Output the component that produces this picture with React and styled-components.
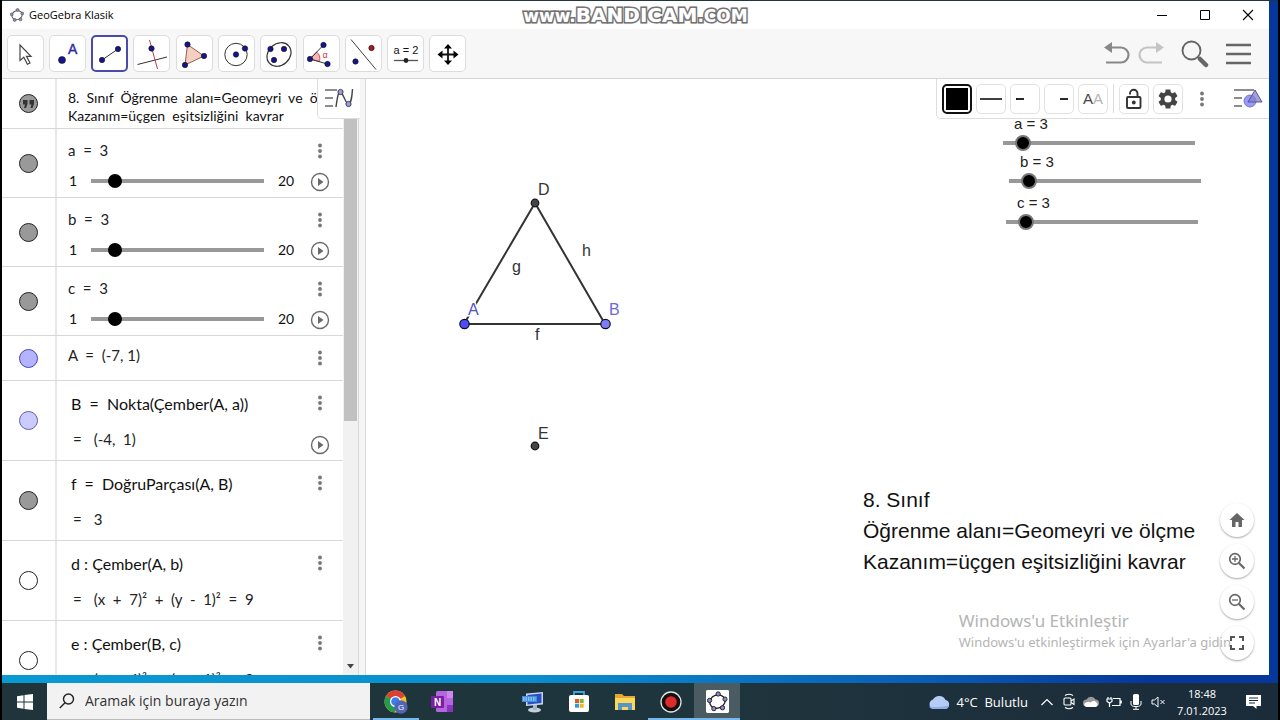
import React, { useState } from "react";
import styled, { createGlobalStyle } from "styled-components";

const UI = `"Open Sans", "Noto Sans", sans-serif`;
const MATH = `Lato, "Open Sans", sans-serif`;
const ARIAL = `"Liberation Sans", Arial, sans-serif`;

const GlobalStyle = createGlobalStyle`
  * { box-sizing: border-box; }
  body { margin: 0; background: #000; font-family: ${UI}; color: #111; }
  button { padding: 0; margin: 0; border: 0; background: none; font: inherit; color: inherit; }
  svg { display: block; }
`;

const Screen = styled.div`
  display: flex;
  flex-direction: column;
  height: 100vh;
  padding: 0 2px;
  background: #000;
  overflow: hidden;
`;
const Desktop = styled.div`
  flex: 1;
  min-height: 0;
  display: flex;
  padding: 0 9px 8px 0;
  border-top: 1px solid #22363d;
  background: linear-gradient(90deg, #0999d3 0%, #0a8fcf 40%, #0a62b8 70%, #06379b 90%, #06379b 100%);
`;
const Window = styled.main`
  flex: 1;
  min-width: 0;
  display: flex;
  flex-direction: column;
  background: #fff;
`;

/* title bar */
const TitleBar = styled.header`
  flex: none;
  display: grid;
  grid-template-columns: 1fr auto 1fr;
  align-items: center;
  height: 28px;
`;
const AppName = styled.div`
  display: flex;
  align-items: center;
  gap: 5px;
  padding-left: 8px;
  font-size: 11px;
  line-height: 16px;
  color: #000;
`;
const Watermark = styled.div`
  display: flex;
  align-items: baseline;
  font: 700 20px/26px "DejaVu Sans", sans-serif;
  color: #fff;
  -webkit-text-stroke: 3px #666;
  paint-order: stroke fill;
  text-shadow: 0 0 3px #999;
`;
const WatermarkSmall = styled.span`
  font-size: 17px;
`;
const WindowControls = styled.div`
  display: flex;
  justify-content: flex-end;
`;
const WindowButton = styled.button`
  display: grid;
  place-items: center;
  width: 43px;
  height: 27px;
`;

/* main tool bar */
const ToolBar = styled.nav`
  flex: none;
  display: flex;
  align-items: center;
  justify-content: space-between;
  height: 50px;
  padding: 0 8px 0 2px;
  background: #f7f7f7;
  border-bottom: 1px solid #d5d5d5;
`;
const Tools = styled.div`
  display: grid;
  grid-template-columns: repeat(11, 1fr);
  justify-items: center;
  width: 465px;
`;
const ToolButton = styled.button`
  display: grid;
  place-items: center;
  width: 37px;
  height: 37px;
  border: ${(p) => (p.$active ? "2px solid #4a4aa8" : "1px solid #dcdcdc")};
  border-radius: 5px;
  background: #fff;
`;
const ToolbarActions = styled.div`
  display: flex;
  align-items: center;
`;
const ActionButton = styled.button`
  display: grid;
  place-items: center;
  width: ${(p) => p.$width}px;
  height: 36px;
`;
const HistoryGroup = styled.div`
  display: flex;
  margin-right: 5px;
`;

/* algebra panel */
const Body = styled.div`
  flex: 1;
  min-height: 0;
  display: flex;
  overflow: hidden;
`;
const AlgebraPanel = styled.section`
  position: relative;
  flex: none;
  display: flex;
  width: 364px;
  overflow: hidden;
`;
const RowList = styled.ul`
  flex: 1;
  min-width: 0;
  margin: 0;
  padding: 0;
  list-style: none;
  font-family: ${MATH};
`;
const Row = styled.li`
  display: flex;
  height: ${(p) => p.$height}px;
  border-bottom: 1px solid #d8d8d8;
`;
const MarbleCell = styled.div`
  flex: none;
  display: grid;
  place-items: center;
  width: 55px;
  border-right: 2px solid #e8e8e8;
`;
const Marble = styled.button`
  display: grid;
  place-items: center;
  width: 19px;
  height: 19px;
  border-radius: 50%;
  border: 1px solid ${(p) => p.$line};
  background: ${(p) => p.$fill};
`;
const RowMain = styled.div`
  flex: 1;
  min-width: 0;
  display: flex;
  flex-direction: column;
  gap: ${(p) => p.$gap}px;
  padding: ${(p) => p.$top}px 0 0 ${(p) => p.$left}px;
`;
const Expression = styled.div`
  font-size: 16px;
  line-height: 20px;
  white-space: pre;
  color: #111;
`;
const Value = styled(Expression)`
  font-size: 15px;
  color: #222;
`;
const Output = styled(Value)`
  display: flex;
  gap: 12px;
  padding-left: 2px;
`;
const NoteText = styled.p`
  margin: 0;
  font-size: 14px;
  line-height: 18px;
  white-space: pre;
`;
const SliderLine = styled.label`
  display: grid;
  grid-template-columns: 23px 173px auto;
  align-items: center;
  height: 20px;
  font-size: 14px;
  line-height: 20px;
`;
const SliderMin = styled.span`
  padding-left: 1px;
`;
const SliderMax = styled.span`
  padding-left: 14px;
`;
const PanelRange = styled.input`
  appearance: none;
  width: 100%;
  height: 14px;
  margin: 0;
  background: none;
  &::-webkit-slider-runnable-track {
    height: 4px;
    background: #989898;
  }
  &::-webkit-slider-thumb {
    appearance: none;
    width: 14px;
    height: 14px;
    margin-top: -5px;
    border-radius: 50%;
    background: #000;
  }
`;
const RowActions = styled.div`
  flex: none;
  display: flex;
  flex-direction: column;
  align-items: center;
  justify-content: space-between;
  width: 46px;
  padding: 12px 0 5px;
`;
const IconButton = styled.button`
  display: grid;
  place-items: center;
  width: 20px;
  height: 20px;
`;
const ScrollBar = styled.div`
  flex: none;
  display: flex;
  flex-direction: column;
  justify-content: space-between;
  align-items: center;
  width: 15px;
  padding-bottom: 6px;
  background: #f1f1f1;
`;
const ScrollThumb = styled.div`
  width: 13px;
  height: 58%;
  background: #c1c1c1;
`;
const Divider = styled.div`
  flex: none;
  width: 8px;
  background: #f5f5f5;
  border: solid #d9d9d9;
  border-width: 0 1px;
`;
const PanelToggle = styled.button`
  position: absolute;
  top: 0;
  right: 6px;
  display: grid;
  place-items: center;
  width: 43px;
  height: 40px;
  background: #fff;
  border: solid #ddd;
  border-width: 0 0 1px 1px;
  border-radius: 0 0 0 5px;
`;

/* graphics view */
const Graphics = styled.section`
  position: relative;
  flex: 1;
  min-width: 0;
  overflow: hidden;
  background: #fff;
`;
const Drawing = styled.svg`
  position: absolute;
  left: 0;
  top: 0;
  font: 16px ${ARIAL};
`;
const CanvasSlider = styled.label`
  position: absolute;
  left: ${(p) => p.$x}px;
  top: ${(p) => p.$y}px;
  display: flex;
  flex-direction: column;
  width: 208px;
  font: 15px/20px ${ARIAL};
  color: #222;
`;
const CanvasSliderName = styled.span`
  padding-left: 19px;
`;
const CanvasRange = styled.input`
  appearance: none;
  width: 100%;
  height: 18px;
  margin: 0;
  background: linear-gradient(#989898, #989898) center / 192px 4px no-repeat;
  &::-webkit-slider-thumb {
    appearance: none;
    width: 16px;
    height: 16px;
    border: 2px solid #777;
    border-radius: 50%;
    background: #000;
  }
`;
const CanvasNote = styled.p`
  position: absolute;
  left: 497px;
  top: 405px;
  margin: 0;
  font: 21px/31px ${ARIAL};
  white-space: pre;
  color: #111;
`;
const Activation = styled.div`
  position: absolute;
  right: 38px;
  bottom: 23px;
  font-family: "Noto Sans", sans-serif;
  color: #b4b4b4;
  white-space: nowrap;
`;
const ActivationTitle = styled.div`
  font-size: 17px;
  line-height: 22px;
`;
const ActivationText = styled.div`
  font-size: 13px;
  line-height: 20px;
`;
const StyleBar = styled.div`
  position: absolute;
  top: 0;
  right: 0;
  display: flex;
  align-items: center;
  gap: 4px;
  height: 40px;
  padding: 0 6px 0 5px;
  background: #fff;
  border: solid #ddd;
  border-width: 0 0 1px 1px;
  border-radius: 0 0 0 5px;
`;
const StyleButton = styled.button`
  display: grid;
  place-items: center;
  width: 30px;
  height: 30px;
  border: ${(p) => (p.$selected ? "2px solid #111" : p.$plain ? "0" : "1px solid #e2e2e2")};
  border-radius: 5px;
  background: #fff;
`;
const Swatch = styled.span`
  width: 22px;
  height: 22px;
  background: #000;
`;
const Separator = styled.span`
  width: 1px;
  height: 29px;
  margin: 0 1px;
  background: #ddd;
`;
const StyleToggle = styled(StyleButton)`
  margin-left: 12px;
`;
const TextStyle = styled.span`
  font: 15px/20px ${ARIAL};
  color: #444;
`;
const Faded = styled.span`
  color: #b5b5b5;
`;
const ZoomControls = styled.div`
  position: absolute;
  right: 15px;
  bottom: 15px;
  display: flex;
  flex-direction: column;
  gap: 7px;
`;
const RoundButton = styled.button`
  display: grid;
  place-items: center;
  width: 34px;
  height: 34px;
  border-radius: 50%;
  background: ${(p) => (p.$clear ? "transparent" : "#fff")};
  box-shadow: 0 1px 2px rgba(0, 0, 0, 0.35);
`;

/* task bar */
const TaskBar = styled.footer`
  flex: none;
  display: flex;
  height: 37px;
  color: #fff;
  background: linear-gradient(90deg, #1f353b 0%, #1f353d 55%, #1a2b3a 100%);
`;
const StartButton = styled.button`
  display: grid;
  place-items: center;
  width: 45px;
`;
const SearchBox = styled.label`
  display: flex;
  align-items: center;
  gap: 10px;
  width: 323px;
  padding-left: 12px;
  background: #f2f2f2;
  border-bottom: 1px solid #bbb;
`;
const SearchInput = styled.input`
  flex: 1;
  min-width: 0;
  border: 0;
  outline: 0;
  padding: 0;
  background: none;
  font: 14px/20px ${UI};
  &::placeholder { color: #333; opacity: 1; }
`;
const Apps = styled.div`
  display: flex;
  padding-left: 3px;
`;
const AppButton = styled.button`
  display: grid;
  place-items: center;
  width: 46px;
  background: ${(p) => (p.$active ? "#4a5b62" : "none")};
  box-shadow: ${(p) => (p.$running ? "inset 0 -2px #76b9ed" : "none")};
`;
const AppGap = styled.span`
  width: 45px;
`;
const Tray = styled.div`
  display: flex;
  align-items: center;
  margin-left: auto;
  padding-right: 4px;
`;
const Weather = styled.div`
  display: flex;
  align-items: center;
  gap: 6px;
  margin-right: 8px;
  font-size: 13px;
  white-space: pre;
`;
const TrayIcons = styled.div`
  display: grid;
  grid-template-columns: repeat(6, 1fr);
  width: 134px;
`;
const TrayButton = styled.button`
  display: grid;
  place-items: center;
  height: 24px;
`;
const Clock = styled.div`
  width: 64px;
  font-size: 11px;
  line-height: 17px;
  text-align: center;
`;
const Notifications = styled.button`
  display: grid;
  place-items: center;
  width: 40px;
`;

const NAVY = "#15158c";
const Dot = ({ x, y, r = 2.7, fill = NAVY }) => <circle cx={x} cy={y} r={r} fill={fill} stroke="#111" strokeWidth=".6" />;

const PentagonLogo = ({ size, line = "#555", node = "#8d8db5" }) => (
  <svg width={size} height={size} viewBox="0 0 24 24">
    <ellipse cx="12" cy="12.300" rx="9" ry="7.600" transform="rotate(-20 12 12)" fill="none" stroke={line} strokeWidth="1.600" />
    {[[13, 3.500], [21, 9.500], [18, 19.500], [8, 20.500], [3, 11]].map(([x, y]) => (
      <circle key={x} cx={x} cy={y} r="2.500" fill={node} stroke={line} strokeWidth="1.100" />
    ))}
  </svg>
);

const toolIcons = [
  ["Taşı", <svg width="34" height="34"><path d="M12 8v15.500l3.800-3.200 3.600 7 2.600-1.300-3.500-6.700h4.500z" fill="#fff" stroke="#444" strokeWidth="1.200" /></svg>],
  ["Nokta", <svg width="34" height="34"><Dot x={12} y={23} r={3.5} /><text x="18" y="17" fontFamily="Liberation Sans" fontSize="14" fill="#2a2aa5" stroke="#2a2aa5" strokeWidth=".4">A</text></svg>],
  ["Doğru parçası", <svg width="34" height="34"><path d="M9 23 25 12" stroke="#333" /><Dot x={9} y={23} /><Dot x={25} y={12} /></svg>],
  ["Dik doğru", <svg width="34" height="34"><path d="M2.500 27.500 32 20" stroke="#333" /><path d="m14.500 3 8 29" stroke="#c0394b" /><Dot x={16.500} y={11.500} /></svg>],
  ["Çokgen", <svg width="34" height="34"><path d="M10.500 7.500 27 19 8 28z" fill="#f3d0c2" stroke="#a05a45" /><Dot x={10.500} y={7.500} /><Dot x={27} y={19} /><Dot x={8} y={28} /></svg>],
  ["Çember", <svg width="34" height="34"><circle cx="17" cy="17.500" r="11.200" fill="none" stroke="#333" /><Dot x={17} y={17.500} /><Dot x={26} y={11.500} /></svg>],
  ["Elips", <svg width="34" height="34"><ellipse cx="17" cy="17.500" rx="13" ry="10.700" transform="rotate(-42 17 17.500)" fill="none" stroke="#333" strokeWidth="1.200" /><Dot x={8.500} y={12} /><Dot x={22} y={12} /><Dot x={12} y={23} /></svg>],
  ["Açı", <svg width="34" height="34"><path d="m6 22 6.500-7q4.500 3 3 9.500z" fill="#f7b4b4" stroke="#c0394b" strokeWidth=".8" /><path d="M19.500 8 6 22l17.500 5" fill="none" stroke="#333" /><Dot x={6} y={22} /><Dot x={19.500} y={8} /><Dot x={23.500} y={27} /><text x="18.500" y="20.500" fontFamily="Liberation Sans" fontSize="9" fill="#c0394b">α</text></svg>],
  ["Yansıt", <svg width="34" height="34"><path d="m5 2.500 25 30" stroke="#444" /><Dot x={25.500} y={11} fill="#a3182c" /><Dot x={9.500} y={24.500} /></svg>],
  ["Sürgü", <svg width="34" height="34"><text x="17" y="17" textAnchor="middle" fontFamily="Liberation Sans" fontSize="11" fill="#111">a = 2</text><path d="M5 23.500h24" stroke="#555" strokeWidth="1.300" /><circle cx="17" cy="23.500" r="2.400" fill="#222" /></svg>],
  ["Grafik görünümünü taşı", <svg width="34" height="34"><path d="M17 10v15M10 17.500h15" stroke="#111" strokeWidth="1.800" /><path d="m17 7 4 4.500h-8zM17 28l4-4.500h-8zM6.500 17.500l5-4v8zM27.500 17.500l-5-4v8z" fill="#000" /></svg>],
];

const Dots = () => (
  <svg width="6" height="20" fill="#777"><circle cx="3" cy="4.500" r="1.900" /><circle cx="3" cy="10" r="1.900" /><circle cx="3" cy="15.500" r="1.900" /></svg>
);
const Play = () => (
  <svg width="20" height="20"><circle cx="10" cy="10" r="8.500" fill="none" stroke="#6a6a6a" strokeWidth="1.400" /><path d="M8 6v8l5.500-4z" fill="#6a6a6a" /></svg>
);
const ListLines = () => <path d="M1 3h12M1 11h8M1 19h8" stroke="#8c8c8c" strokeWidth="2" />;

const GREY = { $fill: "#999", $line: "#222" };
const objects = [
  { kind: "slider", name: "a", ...GREY },
  { kind: "slider", name: "b", ...GREY },
  { kind: "slider", name: "c", ...GREY },
  { kind: "value", name: "A", text: "A  =  (-7, 1)", $fill: "#b3b3ff", $line: "#4444b5" },
  { kind: "def", name: "B", text: "B  =  Nokta(Çember(A, a))", out: "(-4,  1)", play: true, $fill: "#cbcbff", $line: "#5f5fa5" },
  { kind: "def", name: "f", text: "f  =  DoğruParçası(A, B)", out: "3", ...GREY },
  { kind: "def", name: "d", text: "d : Çember(A, b)", out: "(x  +  7)²  +  (y  -  1)²  =  9", $fill: "#fff", $line: "#222" },
  { kind: "def", name: "e", text: "e : Çember(B, c)", out: "(x  +  4)²  +  (y  -  1)²  =  9", $fill: "#fff", $line: "#222" },
];
const layouts = {
  slider: { height: 69, $top: 11, $gap: 11, $left: 11 },
  value: { height: 45, $top: 9, $gap: 0, $left: 11 },
  def: { height: 80, $top: 13, $gap: 15, $left: 14 },
};

function AlgebraRow({ item, value, onChange }) {
  const { kind, name, text, out, play, $fill, $line } = item;
  const { height, ...spacing } = layouts[kind];
  return (
    <Row $height={height}>
      <MarbleCell><Marble $fill={$fill} $line={$line} aria-label={`${name} göster`} /></MarbleCell>
      <RowMain {...spacing}>
        {kind === "slider" && (
          <>
            <Value>{`${name}  =  ${value}`}</Value>
            <SliderLine>
              <SliderMin>1</SliderMin>
              <PanelRange type="range" min="1" max="20" value={value} onChange={onChange} aria-label={name} />
              <SliderMax>20</SliderMax>
            </SliderLine>
          </>
        )}
        {kind === "value" && <Value>{text}</Value>}
        {kind === "def" && (
          <>
            <Expression>{text}</Expression>
            <Output><span>=</span><span>{out}</span></Output>
          </>
        )}
      </RowMain>
      <RowActions>
        <IconButton aria-label="Diğer"><Dots /></IconButton>
        {(kind === "slider" || play) && <IconButton aria-label="Oynat"><Play /></IconButton>}
      </RowActions>
    </Row>
  );
}

const Magnifier = ({ sign }) => (
  <svg width="20" height="20" fill="none" stroke="#666"><circle cx="8" cy="8" r="5.300" strokeWidth="1.700" /><path d="m12 12 5.500 5.500" strokeWidth="2.200" /><path d={sign} strokeWidth="1.300" /></svg>
);

export default function App() {
  const [values, setValues] = useState({ a: 3, b: 3, c: 3 });
  const change = (name) => (e) => setValues({ ...values, [name]: Number(e.target.value) });
  return (
    <Screen>
      <GlobalStyle />
      <Desktop>
        <Window>
          <TitleBar>
            <AppName><PentagonLogo size={14} /><span>GeoGebra Klasik</span></AppName>
            <Watermark><WatermarkSmall>www.</WatermarkSmall>BANDICAM<WatermarkSmall>.COM</WatermarkSmall></Watermark>
            <WindowControls>
              <WindowButton aria-label="Küçült"><svg width="12" height="12"><path d="M1 6.500h10" stroke="#000" /></svg></WindowButton>
              <WindowButton aria-label="Büyüt"><svg width="12" height="12"><path d="M1.500 1.500h9v9h-9z" fill="none" stroke="#000" /></svg></WindowButton>
              <WindowButton aria-label="Kapat"><svg width="12" height="12"><path d="m1 1 10 10M11 1 1 11" stroke="#000" strokeWidth="1.100" /></svg></WindowButton>
            </WindowControls>
          </TitleBar>

          <ToolBar>
            <Tools>
              {toolIcons.map(([label, icon], i) => (
                <ToolButton key={label} $active={i === 2} aria-label={label}>{icon}</ToolButton>
              ))}
            </Tools>
            <ToolbarActions>
              <HistoryGroup>
                <ActionButton $width={34} aria-label="Geri al">
                  <svg width="28" height="24"><path d="M6 5.500h12a7.500 7.500 0 0 1 0 15H3" fill="none" stroke="#888" strokeWidth="2.200" /><path d="M1 5.500 9 0v11z" fill="#888" /></svg>
                </ActionButton>
                <ActionButton $width={34} aria-label="Yinele">
                  <svg width="28" height="24"><path d="M22 5.500H10a7.500 7.500 0 0 0 0 15h15" fill="none" stroke="#c4c4c4" strokeWidth="2.200" /><path d="M27 5.500 19 0v11z" fill="#c4c4c4" /></svg>
                </ActionButton>
              </HistoryGroup>
              <ActionButton $width={44} aria-label="Ara">
                <svg width="28" height="28"><circle cx="10.500" cy="10.500" r="9" fill="none" stroke="#666" strokeWidth="1.900" /><path d="m17 17 2.500 2.500" stroke="#666" strokeWidth="2" /><path d="m19 19 6 6" stroke="#666" strokeWidth="4.500" strokeLinecap="round" /></svg>
              </ActionButton>
              <ActionButton $width={44} aria-label="Menü">
                <svg width="26" height="22"><path d="M0 2h25M0 11h25M0 20h25" stroke="#666" strokeWidth="2.600" /></svg>
              </ActionButton>
            </ToolbarActions>
          </ToolBar>

          <Body>
            <AlgebraPanel>
              <RowList>
                <Row $height={50}>
                  <MarbleCell>
                    <Marble {...GREY} aria-label="Metin göster">
                      <svg width="13" height="10" fill="#333"><path d="M1 1h4.500v4L4 9H2l1-3.500H1zM7.500 1H12v4l-1.500 4h-2l1-3.500h-2z" /></svg>
                    </Marble>
                  </MarbleCell>
                  <RowMain $top={10} $gap={0} $left={11}>
                    <NoteText>{"8.  Sınıf  Öğrenme  alanı=Geomeyri  ve  ölçme\nKazanım=üçgen  eşitsizliğini  kavrar"}</NoteText>
                  </RowMain>
                </Row>
                {objects.map((o) => (
                  <AlgebraRow key={o.name} item={o} value={values[o.name]} onChange={change(o.name)} />
                ))}
              </RowList>
              <ScrollBar>
                <ScrollThumb />
                <svg width="9" height="5"><path d="M1 0h7L4.500 4.500z" fill="#444" /></svg>
              </ScrollBar>
              <Divider />
              <PanelToggle aria-label="Cebir görünümü">
                <svg width="30" height="24"><ListLines /><path d="M12 20C13.500 9 14.500 4 16.500 5c3 1.500 5 12 8 12 3-1 3.500-8 4-15" fill="none" stroke="#444" strokeWidth="1.400" /><circle cx="16.500" cy="5" r="2.600" fill="#9999e8" stroke="#444" /><circle cx="24.500" cy="17" r="2.600" fill="#9999e8" stroke="#444" /></svg>
              </PanelToggle>
            </AlgebraPanel>

            <Graphics>
              <Drawing width="300" height="400">
                <path d="M98 245h141L169 124z" fill="none" stroke="#333" strokeWidth="2" />
                <circle cx="98.500" cy="245" r="4.700" fill="#4d4dff" stroke="#111" strokeWidth="1.200" />
                <circle cx="239.500" cy="245" r="4.700" fill="#7d7dff" stroke="#111" strokeWidth="1.200" />
                <circle cx="169" cy="124" r="3.800" fill="#444" stroke="#111" strokeWidth="1.200" />
                <circle cx="169" cy="367" r="3.800" fill="#444" stroke="#111" strokeWidth="1.200" />
                <g fill="#333">
                  <text x="172" y="116">D</text>
                  <text x="216" y="177">h</text>
                  <text x="146" y="193">g</text>
                  <text x="169" y="261">f</text>
                  <text x="172" y="360">E</text>
                </g>
                <text x="102" y="236" fill="#5151c6" stroke="#fff" strokeWidth="3" paintOrder="stroke">A</text>
                <text x="243" y="236" fill="#6a6adb">B</text>
              </Drawing>
              {[["a", 629, 35], ["b", 635, 73], ["c", 632, 114]].map(([n, x, y]) => (
                <CanvasSlider key={n} $x={x} $y={y}>
                  <CanvasSliderName>{`${n} = ${values[n]}`}</CanvasSliderName>
                  <CanvasRange type="range" min="1" max="20" value={values[n]} onChange={change(n)} />
                </CanvasSlider>
              ))}
              <CanvasNote>{"8. Sınıf\nÖğrenme alanı=Geomeyri ve ölçme\nKazanım=üçgen eşitsizliğini kavrar"}</CanvasNote>
              <Activation>
                <ActivationTitle>Windows'u Etkinleştir</ActivationTitle>
                <ActivationText>Windows'u etkinleştirmek için Ayarlar'a gidin</ActivationText>
              </Activation>
              <StyleBar>
                <StyleButton $selected aria-label="Renk"><Swatch /></StyleButton>
                <StyleButton aria-label="Çizgi stili"><svg width="24" height="10"><path d="M1 5h22" stroke="#111" strokeWidth="1.600" /></svg></StyleButton>
                <StyleButton aria-label="Başlangıç"><svg width="24" height="10"><path d="M3 5h8" stroke="#111" strokeWidth="1.800" /></svg></StyleButton>
                <StyleButton aria-label="Bitiş"><svg width="24" height="10"><path d="M13 5h8" stroke="#111" strokeWidth="1.800" /></svg></StyleButton>
                <StyleButton aria-label="Etiket"><TextStyle>A<Faded>A</Faded></TextStyle></StyleButton>
                <Separator />
                <StyleButton aria-label="Kilitle">
                  <svg width="20" height="22" fill="none" stroke="#333" strokeWidth="1.900"><rect x="3" y="9" width="13.500" height="11" rx="1" /><path d="M6 6.500V5.500a3.700 3.700 0 0 1 7.500 0V9" /><circle cx="9.800" cy="14.500" r="1" fill="#333" /></svg>
                </StyleButton>
                <StyleButton aria-label="Ayarlar">
                  <svg width="24" height="24" viewBox="0 0 24 24"><path fill="#444" d="M19.140 12.940c.04-.3.060-.61.060-.94s-.02-.64-.07-.94l2.030-1.580a.5.500 0 0 0 .12-.61l-1.920-3.320a.49.490 0 0 0-.59-.22l-2.390.96c-.5-.38-1.030-.7-1.620-.94l-.36-2.540A.48.480 0 0 0 13.920 2.400h-3.840c-.24 0-.43.170-.47.410l-.36 2.540c-.59.240-1.130.570-1.620.94l-2.390-.96a.48.480 0 0 0-.59.220L2.740 8.870a.47.470 0 0 0 .12.610l2.030 1.580c-.05.300-.09.630-.09.940s.02.640.07.940l-2.030 1.580a.5.500 0 0 0-.12.610l1.920 3.320c.12.220.37.290.59.220l2.390-.96c.5.380 1.030.7 1.620.94l.36 2.540c.05.240.24.410.48.410h3.840c.24 0 .44-.17.47-.41l.36-2.540c.59-.24 1.130-.56 1.620-.94l2.390.96c.22.080.47 0 .59-.22l1.920-3.320a.5.500 0 0 0-.12-.61zM12 15.600a3.600 3.600 0 1 1 0-7.200 3.600 3.600 0 0 1 0 7.200z" /></svg>
                </StyleButton>
                <StyleButton $plain aria-label="Diğer"><Dots /></StyleButton>
                <StyleToggle $plain aria-label="Stil çubuğu">
                  <svg width="30" height="24"><ListLines /><path d="M13 3h8" stroke="#8c8c8c" strokeWidth="2" /><circle cx="17" cy="14" r="6" fill="#9a9af0" stroke="#7777cc" /><path d="m22 3 7 12H15z" fill="#8383c8" fillOpacity=".75" stroke="#5555a8" /></svg>
                </StyleToggle>
              </StyleBar>
              <ZoomControls>
                <RoundButton aria-label="Standart görünüm"><svg width="18" height="16"><path d="M9 1 1.500 8H4v7h3.500v-5h3v5H14V8h2.500z" fill="#666" /></svg></RoundButton>
                <RoundButton aria-label="Yakınlaştır"><Magnifier sign="M5 8h6M8 5v6" /></RoundButton>
                <RoundButton aria-label="Uzaklaştır"><Magnifier sign="M5 8h6" /></RoundButton>
                <RoundButton $clear aria-label="Tam ekran"><svg width="16" height="16"><path d="M2 6V2h4M10 2h4v4M14 10v4h-4M6 14H2v-4" fill="none" stroke="#555" strokeWidth="2" /></svg></RoundButton>
              </ZoomControls>
            </Graphics>
          </Body>
        </Window>
      </Desktop>

      <TaskBar>
        <StartButton aria-label="Başlat"><svg width="16" height="16" fill="#fff"><path d="M0 2.200 6.500 1.300v6.200H0zM7.500 1.100 16 0v7.500H7.500zM0 8.500h6.500v6.200L0 13.800zM7.500 8.500H16V16l-8.500-1.100z" /></svg></StartButton>
        <SearchBox>
          <svg width="16" height="16" fill="none" stroke="#222" strokeWidth="1.400"><circle cx="9.500" cy="6" r="5" /><path d="M6 9.800.8 15" /></svg>
          <SearchInput placeholder="Aramak için buraya yazın" aria-label="Ara" />
        </SearchBox>
        <Apps>
          <AppButton $running aria-label="Chrome">
            <svg width="24" height="24"><circle cx="11.500" cy="11.500" r="11" fill="#f4c430" /><path d="M11.500 11.500 2 6A11 11 0 0 1 21 6z" fill="#dd3f31" /><path d="M11.500 11.500 2 6a11 11 0 0 0 9 16.500z" fill="#269b50" /><circle cx="11.500" cy="11.500" r="5.500" fill="#fff" /><circle cx="11.500" cy="11.500" r="4.300" fill="#3b7ded" /><circle cx="17" cy="17" r="6.700" fill="#5265b5" /><text x="17" y="20" textAnchor="middle" fontSize="8" fontFamily="Liberation Sans" fill="#fff">G</text></svg>
          </AppButton>
          <AppButton aria-label="OneNote">
            <svg width="24" height="22"><rect x="6" y="0" width="17" height="21" rx="1.500" fill="#b565dd" /><path d="M17 0h6v7h-6z" fill="#cf86ee" /><path d="M17 14h6v7h-6z" fill="#8c34bd" /><rect x="1" y="5" width="13" height="12" rx="1" fill="#7a1ea3" /><text x="7.500" y="14.500" textAnchor="middle" fontSize="10" fontWeight="700" fontFamily="Liberation Sans" fill="#fff">N</text></svg>
          </AppButton>
          <AppGap />
          <AppButton aria-label="Ekran klavyesi">
            <svg width="24" height="24"><ellipse cx="13.500" cy="20" rx="6.500" ry="2.500" fill="#c5d0dd" /><path d="M12 15h4v5h-4z" fill="#a5b4cc" /><path d="M5 3.500 22 2v12.500L5 16z" fill="#c8d5ef" /><path d="m6.500 5 14-1.500V13l-14 1.500z" fill="#2850c0" /><rect x="1" y="6" width="15" height="6" fill="#3a8ee0" /><path d="M2 8h13M2 10h13" stroke="#dceaff" strokeDasharray="1.500 1" /></svg>
          </AppButton>
          <AppButton aria-label="Microsoft Store">
            <svg width="24" height="24"><path d="M7 6V2h10v4" fill="none" stroke="#3aa5e8" strokeWidth="1.800" /><rect x="2" y="5" width="20" height="17" rx="2" fill="#fff" /><path d="M8 9h4v4H8z" fill="#e4572e" /><path d="M12.700 9h4v4h-4z" fill="#7cb82f" /><path d="M8 13.700h4v4H8z" fill="#2c9be0" /><path d="M12.700 13.700h4v4h-4z" fill="#f4b51e" /></svg>
          </AppButton>
          <AppButton aria-label="Dosya Gezgini">
            <svg width="24" height="24"><path d="M2 4h7l2 2h11v14H2z" fill="#e5a832" /><path d="M2 8h20v12H2z" fill="#ffd65c" /><path d="M5 20v-7h14v7h-4v-3H9v3z" fill="#5397c8" /></svg>
          </AppButton>
          <AppButton $running aria-label="Bandicam">
            <svg width="24" height="24"><circle cx="12" cy="12" r="10" fill="#111" stroke="#e5e5e5" strokeWidth="1.300" /><circle cx="12" cy="12" r="5.800" fill="#e02a2a" /></svg>
          </AppButton>
          <AppButton $active $running aria-label="GeoGebra">
            <svg width="23" height="23" viewBox="0 0 24 24"><rect width="24" height="24" rx="1.500" fill="#fff" /><g transform="translate(1 1) scale(.9)"><PentagonLogo size={24} line="#222" node="#8a8ad0" /></g></svg>
          </AppButton>
        </Apps>
        <Tray>
          <Weather>
            <svg width="24" height="18"><path d="M6 16a5 5 0 0 1 0-9.500 7 7 0 0 1 12.500.5A4.600 4.600 0 0 1 18.500 16z" fill="#b5cdf5" /><path d="M6 16a5 5 0 0 1-4-2.500q9 1.500 20-1A4.600 4.600 0 0 1 18.500 16z" fill="#8eafe8" /></svg>
            <span>{"4°C  Bulutlu"}</span>
          </Weather>
          <TrayIcons>
            <TrayButton aria-label="Gizli simgeler"><svg width="14" height="10"><path d="m1.500 8 5.500-5.500L12.500 8" fill="none" stroke="#fff" strokeWidth="1.200" /></svg></TrayButton>
            <TrayButton aria-label="Şimdi toplantı"><svg width="12" height="17" fill="none" stroke="#fff" strokeWidth="1.100"><rect x="1" y="5" width="7" height="7" rx="1" /><path d="m8 8 3-2v5.500L8 9.500M2 2.500q4-2.500 8 0M2 14.500q4 2.500 8 0" /></svg></TrayButton>
            <TrayButton aria-label="OneDrive"><svg width="17" height="12"><path d="M3.500 10.500a3.500 3.500 0 0 1 0-7 5 5 0 0 1 9 0 3.500 3.500 0 0 1 0 7z" fill="#999" /><path d="M3.500 11q-3-1-2-3.500 3-3 6-1 3-3 5.500-.5a2.800 2.800 0 0 1 0 5z" fill="#fff" /></svg></TrayButton>
            <TrayButton aria-label="Pil"><svg width="16" height="12" fill="none" stroke="#fff" strokeWidth="1.200"><path d="M7 2.500h7v7H6M15.200 4.500v3M1 3h5v2.500L3.500 7 1 5.500zM2 1v2M5 1v2M3.500 7v4" /></svg></TrayButton>
            <TrayButton aria-label="Mikrofon"><svg width="12" height="16"><rect x="3" y="0" width="6" height="11" rx="1.500" fill="#fff" /><path d="M1 7v3q0 2.500 5 2.500t5-2.500V7M6 12.500v2.500M3 15.300h6" fill="none" stroke="#fff" /></svg></TrayButton>
            <TrayButton aria-label="Ses kapalı"><svg width="15" height="12" fill="none" stroke="#fff"><path d="M1 4h2.500L7 1v10L3.500 8H1zM9.500 4l4 4M13.500 4l-4 4" /></svg></TrayButton>
          </TrayIcons>
          <Clock><div>18:48</div><div>7.01.2023</div></Clock>
          <Notifications aria-label="Bildirimler"><svg width="16" height="16"><path d="M0 1h15v11h-4.500v3L7 12H0z" fill="#fff" /><path d="M3 4h9M3 6.500h9M3 9h6" stroke="#1a2b3a" /></svg></Notifications>
        </Tray>
      </TaskBar>
    </Screen>
  );
}
